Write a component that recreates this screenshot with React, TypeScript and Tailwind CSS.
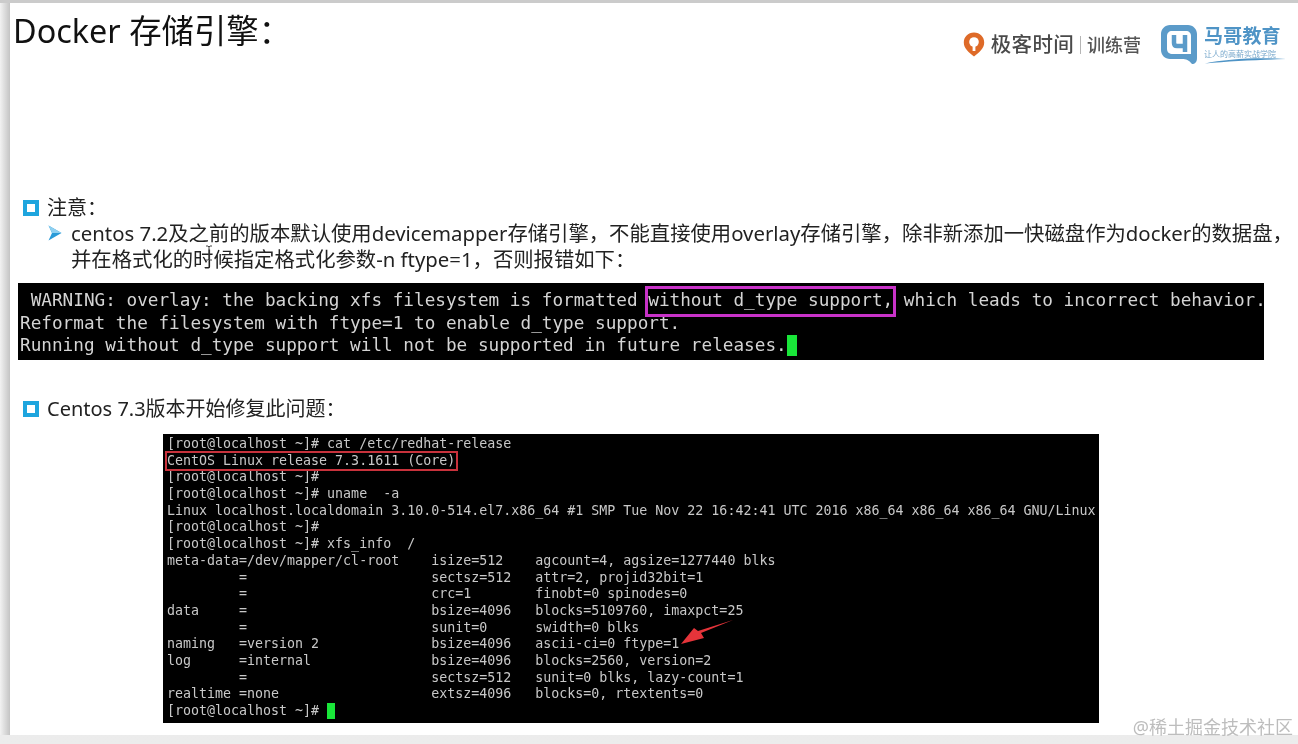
const bodyFont = "font-['Noto_Sans','Noto_Sans_CJK_SC',sans-serif]";
const monoFont = "font-['DejaVu_Sans_Mono',monospace]";

const centosLines = [
  "[root@localhost ~]# cat /etc/redhat-release",
  "CentOS Linux release 7.3.1611 (Core)",
  "[root@localhost ~]#",
  "[root@localhost ~]# uname  -a",
  "Linux localhost.localdomain 3.10.0-514.el7.x86_64 #1 SMP Tue Nov 22 16:42:41 UTC 2016 x86_64 x86_64 x86_64 GNU/Linux",
  "[root@localhost ~]#",
  "[root@localhost ~]# xfs_info  /",
  "meta-data=/dev/mapper/cl-root    isize=512    agcount=4, agsize=1277440 blks",
  "         =                       sectsz=512   attr=2, projid32bit=1",
  "         =                       crc=1        finobt=0 spinodes=0",
  "data     =                       bsize=4096   blocks=5109760, imaxpct=25",
  "         =                       sunit=0      swidth=0 blks",
  "naming   =version 2              bsize=4096   ascii-ci=0 ftype=1",
  "log      =internal               bsize=4096   blocks=2560, version=2",
  "         =                       sectsz=512   sunit=0 blks, lazy-count=1",
  "realtime =none                   extsz=4096   blocks=0, rtextents=0",
];

function Bullet() {
  return <span className="box-border block h-[16px] w-[16px] shrink-0 border-[4px] border-[#1ea5de] bg-white" />;
}

function GeekLogo() {
  return (
    <div className="flex items-center">
      <svg width="22" height="25" viewBox="0 0 22 25" className="mr-[6px]">
        <path d="M11 0.5C5 0.5 0.8 5 0.8 10.5 0.8 16.5 6 20.5 11 24.5 16 20.5 21.2 16.5 21.2 10.5 21.2 5 17 0.5 11 0.5Z" fill="#de6a28" />
        <circle cx="11" cy="10" r="4.8" fill="#fff" />
        <path d="M9.6 13h2.8v6h-2.8z" fill="#fff" />
      </svg>
      <span className="text-[20.5px] font-medium leading-none tracking-[0.3px] text-[#4a4a4a]">极客时间</span>
      <span className="mx-[6px] h-[18px] w-px bg-[#b5b5b5]" />
      <span className="text-[18px] font-medium leading-none text-[#555]">训练营</span>
    </div>
  );
}

function MageLogo() {
  return (
    <div className="flex items-center">
      <svg width="38" height="41" viewBox="0 0 38 41" className="mr-[6px]">
        <path d="M10 1H28C33 1 37 5 37 10V34C37 38 35 40 32 40 29 36 26 35 22 35H10C5 35 1 31 1 26V10C1 5 5 1 10 1Z" fill="#5b9bc9" />
        <path d="M12 7H26C29 7 31 9 31 12V30H13C9 30 7 28 7 25V12C7 9 9 7 12 7Z" fill="#fff" />
        <path d="M14 11V19C14 21 15 22 17 22H25M25 11V28" fill="none" stroke="#5b9bc9" strokeWidth="4.5" />
      </svg>
      <div className="flex w-[82px] flex-col">
        <span className="text-[19px] font-bold leading-[22px] tracking-[0.2px] text-[#4f94c6]">马哥教育</span>
        <span className="mt-[2px] whitespace-nowrap text-[8px] leading-[9px] text-[#7aa9cc]">让人的高薪实战学院</span>
        <svg width="82" height="7" viewBox="0 0 82 7" className="-mt-[1px]">
          <path d="M1 6.5C20 2 55 0 82 2 55 3 25 4 1 6.5Z" fill="#4f94c6" />
        </svg>
      </div>
    </div>
  );
}

export default function App() {
  return (
    <div className={`relative h-[744px] w-[1298px] overflow-hidden bg-gradient-to-b from-[#e4e4e4] to-[#ececec] blur-[0.4px] ${bodyFont}`}>
      <div className="h-[3px] bg-[#cbcbcb]" />
      <div className="flex h-[732px]">
        <div className="w-[10px] shrink-0 bg-gradient-to-r from-[#f2f2f2] to-[#c4c4c4]" />
        <div className="relative flex-1 bg-white">
          {/* Header */}
          <div className="flex h-[192px] items-start justify-between pr-[12px]">
            <h1 className="ml-[3px] mt-[6px] text-[32.4px] font-normal leading-[42px] text-[#111]">Docker 存储引擎：</h1>
            <div className="mt-[21px] flex items-center gap-[19px]">
              <GeekLogo />
              <MageLogo />
            </div>
          </div>

          {/* Notice */}
          <div className="ml-[13px] flex h-[26px] items-center gap-[8px]">
            <Bullet />
            <span className="text-[20px] leading-[26px] text-[#222]">注意：</span>
          </div>
          <div className="-mt-px ml-[38px] flex">
            <svg width="14" height="16" viewBox="0 0 14 16" className="mr-[9px] mt-[5px] shrink-0">
              <path d="M0.5 0.5 13.5 8 0.5 15.5 4 8Z" fill="#2a9bd8" />
              <path d="M0.5 0.5 13.5 8 4 8Z" fill="#8fd0f0" />
            </svg>
            <p className="whitespace-nowrap text-[20.35px] leading-[26px] text-[#222]">
              centos 7.2及之前的版本默认使用devicemapper存储引擎，不能直接使用overlay存储引擎，除非新添加一快磁盘作为docker的数据盘，
              <br />
              并在格式化的时候指定格式化参数-n ftype=1，否则报错如下：
            </p>
          </div>
          {/* mouse pointer left in the recording */}
          <svg width="8" height="16" viewBox="0 0 8 16" className="absolute left-[195px] top-[242px]">
            <path d="M1 1h2l1 1 1-1h2M4 2v12M1 15h2l1-1 1 1h2" fill="none" stroke="#444" strokeWidth="1" />
          </svg>

          {/* Warning terminal */}
          <div className={`relative ml-[8px] mt-[11px] h-[77px] w-[1246px] bg-black pl-[2px] pt-[6px] text-[17.7px] leading-[22.5px] text-[#d4d4d4] ${monoFont}`}>
            <div className="whitespace-pre"> WARNING: overlay: the backing xfs filesystem is formatted without d_type support, which leads to incorrect behavior.</div>
            <div className="whitespace-pre">Reformat the filesystem with ftype=1 to enable d_type support.</div>
            <div className="flex items-center whitespace-pre">
              Running without d_type support will not be supported in future releases.
              <span className="h-[21px] w-[10px] bg-[#19e639]" />
            </div>
            <div className="absolute left-[627px] top-[3px] h-[31px] w-[251px] border-[3px] border-[#c832c8]" />
          </div>

          {/* Fix note */}
          <div className="ml-[13px] mt-[36px] flex h-[26px] items-center gap-[8px]">
            <Bullet />
            <span className="text-[20px] leading-[26px] text-[#222]">Centos 7.3版本开始修复此问题：</span>
          </div>

          {/* xfs_info terminal */}
          <div className={`relative ml-[153px] mt-[12px] h-[289px] w-[936px] bg-black pl-[4px] pt-[2px] text-[13.3px] leading-[16.7px] text-[#c8c8c8] ${monoFont}`}>
            {centosLines.map((line, i) => (
              <div key={i} className="h-[16.7px] whitespace-pre">{line}</div>
            ))}
            <div className="flex h-[16.7px] items-center whitespace-pre">
              [root@localhost ~]# <span className="h-[16px] w-[8px] bg-[#19e639]" />
            </div>
            <div className="absolute left-[2px] top-[17px] h-[20px] w-[293px] border-2 border-[#c8323c]" />
            <svg width="56" height="26" viewBox="0 0 56 26" className="absolute left-[516px] top-[185px]">
              <path d="M54 1 22 14 25 19 2 25 15 9 19 12Z" fill="#e5343a" />
            </svg>
          </div>
        </div>
      </div>

      {/* Watermark */}
      <span className="absolute bottom-[6px] right-[5px] text-[18px] leading-[22px] text-[#bdbdbd]">@稀土掘金技术社区</span>
    </div>
  );
}
